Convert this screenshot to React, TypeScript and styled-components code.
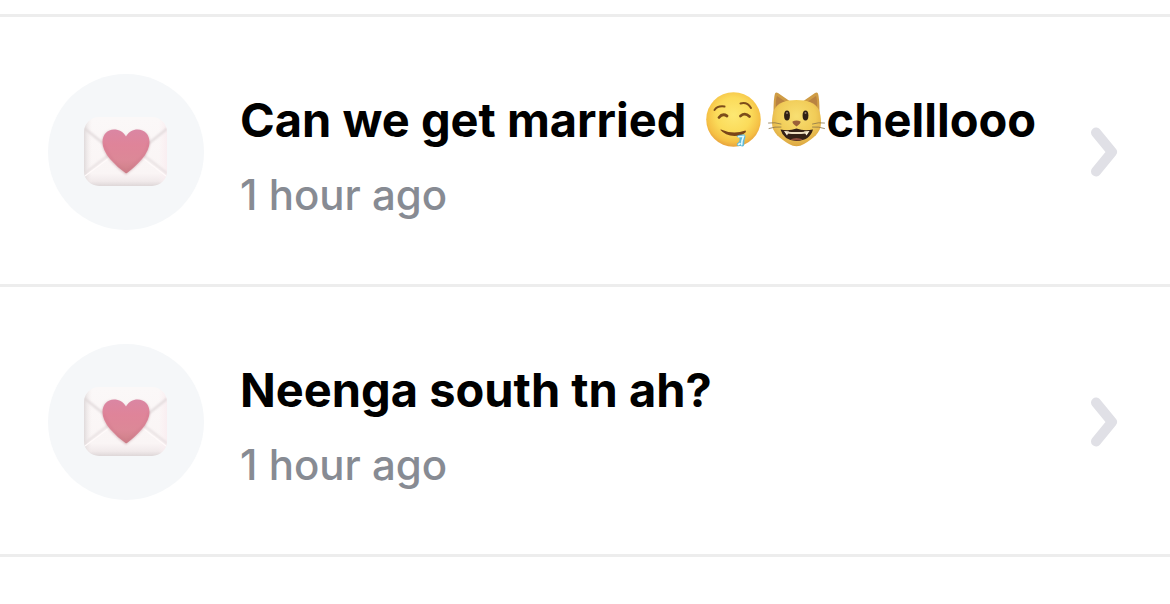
import React, { useId } from "react";
import styled, { createGlobalStyle } from "styled-components";

const GlobalStyle = createGlobalStyle`
  * { box-sizing: border-box; }
  body {
    margin: 0;
    background: #fff;
    font-family: Inter, "Liberation Sans", sans-serif;
  }
`;

const List = styled.ul`
  margin: 0;
  padding: 14px 0 0;
  list-style: none;
`;

const Item = styled.li`
  border-top: 3px solid #ededed;
  &:last-child { border-bottom: 3px solid #ededed; }
`;

const RowLink = styled.a`
  display: flex;
  align-items: center;
  gap: 36px;
  padding: 57px 52px 54px 48px;
  color: inherit;
  text-decoration: none;
`;

const Avatar = styled.span`
  display: flex;
  flex: none;
  align-items: center;
  justify-content: center;
  width: 156px;
  height: 156px;
  border-radius: 50%;
  background: #f5f7f9;
`;

const Body = styled.span`
  display: flex;
  flex: 1;
  flex-direction: column;
  gap: 20px;
  min-width: 0;
  padding-top: 2px;
`;

const Title = styled.span`
  display: flex;
  align-items: center;
  color: #000;
  font-size: 47px;
  font-weight: 650;
  line-height: 64px;
  white-space: pre;
`;

const Time = styled.span`
  color: #878b93;
  font-size: 42px;
  font-weight: 500;
  line-height: 46px;
`;

const EmojiGroup = styled.span`
  display: flex;
  flex: none;
  gap: 4px;
  margin: 0 1px 0 6px;
`;

const Icon = styled.svg`
  display: block;
  flex: none;
`;

function LoveLetter() {
  const id = useId();
  const ref = (name: string) => `url(#${id}${name})`;
  return (
    <Icon width="92" height="80" viewBox="80 112 92 80" aria-hidden="true">
      <defs>
        <linearGradient id={`${id}paper`} x1="0" y1="0" x2="0" y2="1">
          <stop offset="0" stopColor="#fbf8f8" />
          <stop offset=".82" stopColor="#faf5f5" />
          <stop offset=".93" stopColor="#f1eaeb" />
          <stop offset="1" stopColor="#ded7d8" />
        </linearGradient>
        <linearGradient id={`${id}side`} x1="0" y1="0" x2="1" y2="0">
          <stop offset="0" stopColor="#d9d3d4" stopOpacity=".8" />
          <stop offset=".1" stopColor="#f4eeee" stopOpacity="0" />
          <stop offset=".9" stopColor="#fbeef1" stopOpacity="0" />
          <stop offset="1" stopColor="#f9eef1" />
        </linearGradient>
        <linearGradient id={`${id}heart`} x1="0" y1="0" x2="0" y2="1">
          <stop offset="0" stopColor="#da86a3" />
          <stop offset=".35" stopColor="#df8499" />
          <stop offset=".7" stopColor="#dc8897" />
          <stop offset="1" stopColor="#cd8087" />
        </linearGradient>
        <filter id={`${id}soft`} x="-20%" y="-20%" width="140%" height="140%">
          <feGaussianBlur stdDeviation="1.3" />
        </filter>
        <clipPath id={`${id}clip`}>
          <rect x="84" y="117" width="83" height="69" rx="15" />
        </clipPath>
      </defs>
      <rect x="84" y="117" width="83" height="69" rx="15" fill={ref("paper")} />
      <rect x="84" y="117" width="83" height="69" rx="15" fill={ref("side")} />
      <g clipPath={ref("clip")}>
        <g filter={ref("soft")} fill="none" strokeWidth="2">
          <path d="M84 128 119 156Q126 162 133 156L168 128" stroke="#ded6d8" />
          <path d="M84 174 110 154M168 174 142 154" stroke="#e6dedf" />
        </g>
        <path d="M85 176 112 156M166 176 140 156" stroke="#fffafa" strokeWidth="1.2" />
      </g>
      <path d="M126 175C116 167 102 156 102 142C102 134 107 130 113 130C119 130 124 133 126 137C128 133 133 130 138 130C144 130 150 134 150 142C150 156 136 167 126 175Z" fill="#b88991" opacity=".35" filter={ref("soft")} />
      <path d="M125.500 173Q117 167 110 159Q102.500 150 102.500 142C102.500 134.500 107.500 129.500 114 129.500C119 129.500 123.500 132 126 136.500C128.500 132 133 129.500 137.500 129.500C144.500 129.500 149.500 134.500 149.500 142Q149.500 150 142 159Q134 168 127 173Q126.200 173.600 125.500 173Z" fill={ref("heart")} />
      <path d="M104 144Q106 152 113 160Q120 168 126 172Q135 165 142 157Q148 150 148.500 142" fill="none" stroke="#c96f87" strokeWidth="1.200" opacity=".45" filter={ref("soft")} />
    </Icon>
  );
}

function DroolingFace() {
  const id = useId();
  return (
    <Icon width="59" height="60" viewBox="704 91 59 60" role="img" aria-label="Drooling face">
      <defs>
        <radialGradient id={id} cx=".5" cy=".42" r=".58">
          <stop offset="0" stopColor="#fde873" />
          <stop offset=".55" stopColor="#fbdb5a" />
          <stop offset=".85" stopColor="#f5c045" />
          <stop offset="1" stopColor="#e8a23c" />
        </radialGradient>
      </defs>
      <circle cx="733.500" cy="120.500" r="27.300" fill={`url(#${id})`} />
      <g fill="none" stroke="#7c4c1a" strokeLinecap="round">
        <path d="M714.500 111Q717.500 106.500 724.500 107.500" strokeWidth="2" />
        <path d="M740.500 104.500Q747 102.500 751 109" strokeWidth="2" />
        <path d="M719 118.500Q722.500 114 727 117" strokeWidth="2.800" />
        <path d="M740.500 117Q745 113 749.500 117.500" strokeWidth="2.800" />
      </g>
      <path d="M721 130.500Q733 136 745.500 131.500Q746.500 132 745.500 133.500Q741.500 137 734.500 137Q725 136.500 720.500 131Q720.300 130.300 721 130.500Z" fill="#7a4518" />
      <path d="M736.500 137.500Q738 135 744.500 135.500Q746.300 136.500 744.500 141L744 146.500Q743 148 740.500 147Q736 147.500 737 144.500Q740 143 739.500 139Z" fill="#5fb9d8" />
      <path d="M738.500 137.800 743.500 137.300 742 142 741.700 145.800M738.500 145.500 740 144.500" fill="none" stroke="#dffaff" strokeWidth="1.600" strokeLinecap="round" />
    </Icon>
  );
}

function GrinningCat() {
  const id = useId();
  return (
    <Icon width="59" height="60" viewBox="767 90 59 60" role="img" aria-label="Grinning cat">
      <defs>
        <radialGradient id={id} cx=".5" cy=".35" r=".65">
          <stop offset="0" stopColor="#f8df72" />
          <stop offset=".6" stopColor="#f1cc58" />
          <stop offset="1" stopColor="#dca642" />
        </radialGradient>
      </defs>
      <path d="M773.500 113Q773.500 98 775 93.500Q776 91.800 778 93L791 102ZM819.500 113Q819.500 98 818 93.500Q817 91.800 815 93L802 102Z" fill="#cf9c45" />
      <path d="M776 107Q775.500 100 777 96L786 102ZM817 107Q817.500 100 816 96L807 102Z" fill="#b98241" />
      <path d="M796.500 100C808 100 815 103 818.500 109C820.500 113 821 118 821 123C821 133 813 138.500 804 144Q796.500 148.500 789 144C780 138.500 772 133 772 123C772 118 772.500 113 774.500 109C778 103 785 100 796.500 100Z" fill={`url(#${id})`} />
      <ellipse cx="787" cy="115.500" rx="2.900" ry="5" fill="#302014" />
      <ellipse cx="805.500" cy="115.500" rx="2.900" ry="5" fill="#302014" />
      <circle cx="787" cy="113" r="1" fill="#8f7964" />
      <circle cx="805.500" cy="113" r="1" fill="#8f7964" />
      <path d="M792.500 121.500Q796.500 119.500 800.500 121.500Q801 123.500 796.500 126.500Q792 123.500 792.500 121.500Z" fill="#9b6038" />
      <path d="M780.500 129.500Q789 131.500 796.500 128.500Q804 131.500 813 129.500Q810 140.500 796.500 141Q783.500 140.500 780.500 129.500Z" fill="#352016" />
      <path d="M784 131 789 131.500 787 135.500ZM804 131.500 809.500 131 806.500 135.500Z" fill="#fff4d9" />
      <path d="M786 131.500Q796.500 132.500 807 131.500L806 133.500Q796.500 134.500 787 133.500Z" fill="#ecdcbf" />
      <path d="M790 139.500Q796.500 136.500 803 139.500Q797 141.500 790 139.500Z" fill="#8d4c3d" />
      <path d="M781 124Q775 122 768.500 123M781 127Q775 126.500 769 128.500M812.500 124Q818.500 122 824.500 123M812.500 127Q818.500 126.500 824.500 128.500" fill="none" stroke="#897449" strokeWidth=".8" strokeLinecap="round" />
    </Icon>
  );
}

function Chevron() {
  return (
    <Icon width="28" height="50" viewBox="0 0 28 50" aria-hidden="true">
      <path d="M6 5.500 22 25 6 44.500" fill="none" stroke="#e0e0e6" strokeWidth="10" strokeLinecap="round" strokeLinejoin="round" />
    </Icon>
  );
}

interface MessageProps {
  children: React.ReactNode;
  time: string;
}

function Message({ children, time }: MessageProps) {
  return (
    <Item>
      <RowLink href="#">
        <Avatar><LoveLetter /></Avatar>
        <Body>
          <Title>{children}</Title>
          <Time>{time}</Time>
        </Body>
        <Chevron />
      </RowLink>
    </Item>
  );
}

export default function App() {
  return (
    <>
      <GlobalStyle />
      <main>
        <List>
          <Message time="1 hour ago">
            <span>Can we get married </span>
            <EmojiGroup>
              <DroolingFace />
              <GrinningCat />
            </EmojiGroup>
            <span>chelllooo</span>
          </Message>
          <Message time="1 hour ago">Neenga south tn ah?</Message>
        </List>
      </main>
    </>
  );
}
